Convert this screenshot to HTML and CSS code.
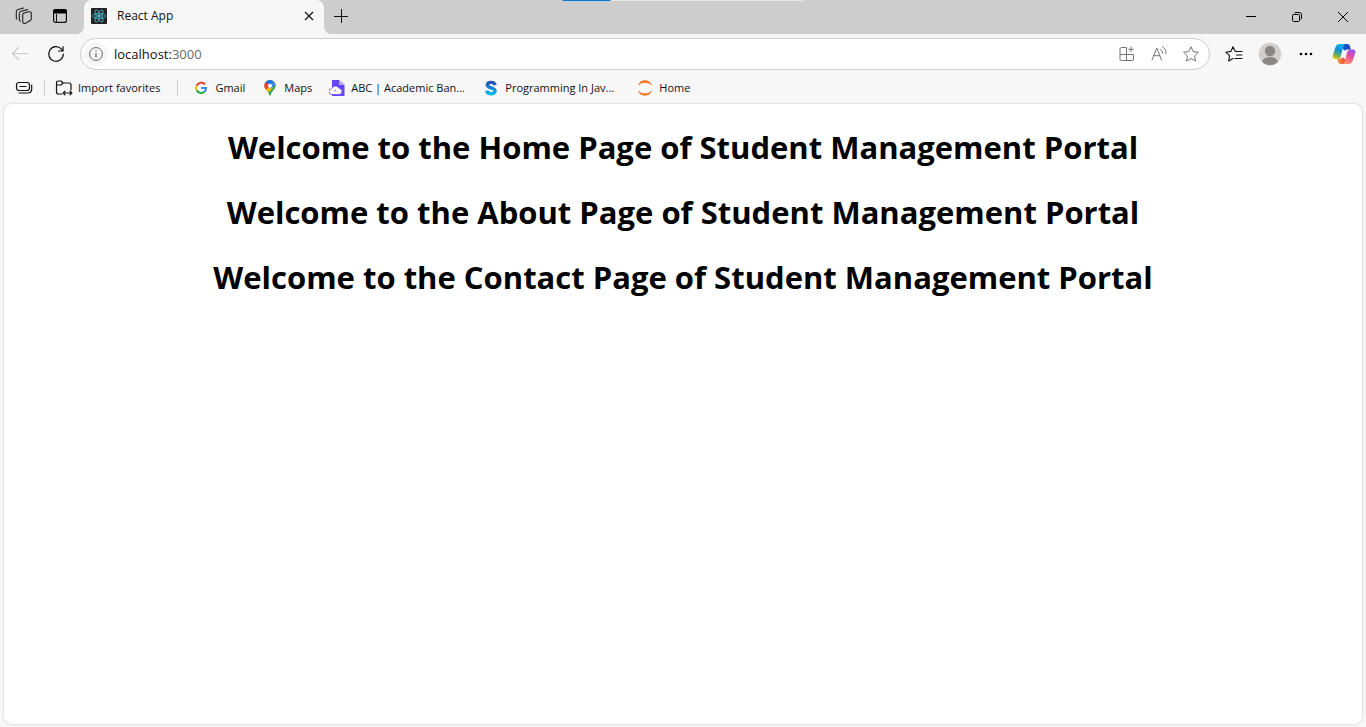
FILE: index.html
```html
<!DOCTYPE html>
<html lang="en">
<head>
<meta charset="utf-8">
<title>React App</title>
<link rel="stylesheet" href="styles.css">
</head>
<body>
<div class="browser">
  <header class="tabstrip">
    <div class="share-bar"><span class="share-handle"></span></div>
    <div class="strip-left">
      <button class="icon-btn" aria-label="Workspaces">
        <svg width="18" height="18" viewBox="0 0 18 18" fill="none" stroke="#222" stroke-width="1.1" stroke-linejoin="round" stroke-linecap="round"><path d="M8.2 6.3 13.8 4.8Q16.2 4.3 16.3 6.8V11.7Q16.3 13 15.2 13.5L11 16Q8 17.500 7.700 14.500V7.500Q7.700 6.500 8.900 6.200Z"/><path d="M5.200 14.200Q4.300 13.500 4.400 12V6.500Q4.400 4.800 6 4.300L12.500 2.600"/><path d="M1.900 12Q1.200 11.500 1.300 10V4.700Q1.300 3 3 2.500L8.700 1"/></svg>
      </button>
      <button class="icon-btn" aria-label="Tab actions menu">
        <svg width="16" height="16" viewBox="0 0 16 16" fill="none"><rect x="1.600" y="1.600" width="12.800" height="12.800" rx="2" stroke="#111" stroke-width="1.200"/><path d="M1 5.500V3.500Q1 1 3.500 1h9Q15 1 15 3.500v2Z" fill="#000"/><path d="M4.500 6v8.400" stroke="#111" stroke-width="1"/></svg>
      </button>
    </div>
    <div class="tab">
      <svg width="16" height="16" viewBox="0 0 16 16"><rect width="16" height="16" rx="1" fill="#222"/><g fill="none" stroke="#53b9d1" stroke-width=".8"><ellipse cx="8" cy="8" rx="6.800" ry="2.600"/><ellipse cx="8" cy="8" rx="6.800" ry="2.600" transform="rotate(60 8 8)"/><ellipse cx="8" cy="8" rx="6.800" ry="2.600" transform="rotate(120 8 8)"/></g><circle cx="8" cy="8" r="1.400" fill="#61dafb"/></svg>
      <span class="tab-title">React App</span>
      <button class="tab-close" aria-label="Close tab"><svg width="10" height="10" viewBox="0 0 10 10" stroke="#111" stroke-width="1.200"><path d="m1 1 8 8M9 1 1 9"/></svg></button>
    </div>
    <button class="new-tab" aria-label="New tab"><svg width="14" height="14" viewBox="0 0 14 14" stroke="#111" stroke-width="1"><path d="M7.500 0v14M0 7.500h14"/></svg></button>
    <div class="window-controls">
      <button class="win-btn" aria-label="Minimize"><svg width="10" height="10" viewBox="0 0 10 10" stroke="#000"><path d="M0 4.500h10"/></svg></button>
      <button class="win-btn" aria-label="Restore"><svg width="10" height="10" viewBox="0 0 10 10" fill="none" stroke="#000"><rect x=".5" y="2.500" width="7" height="7" rx="1.200"/><path d="M2.500 1Q3 .5 4 .5h3.200Q9.500 .5 9.500 2.800V6q0 1-.7 1.500"/></svg></button>
      <button class="win-btn" aria-label="Close"><svg width="10" height="10" viewBox="0 0 10 10" stroke="#000"><path d="m0 0 10 10M10 0 0 10"/></svg></button>
    </div>
  </header>

  <nav class="toolbar" aria-label="Navigation">
    <button class="icon-btn" aria-label="Back"><svg width="18" height="16" viewBox="0 0 18 16" fill="none" stroke="#c9c9c9" stroke-width="1.100"><path d="M17 7.500H1.500M8 1 1.500 7.500 8 14"/></svg></button>
    <button class="icon-btn" aria-label="Refresh"><svg width="18" height="18" viewBox="0 0 18 18" fill="none" stroke="#111" stroke-width="1.200" stroke-linecap="round"><path d="M16.300 9A7.300 7.300 0 1 1 14.500 4.200L16 6M16 1.500V6h-4.500"/></svg></button>
    <div class="address">
      <button class="site-info" aria-label="View site information"><svg width="14" height="14" viewBox="0 0 14 14" fill="none" stroke="#666"><circle cx="7" cy="7" r="6.400"/><path d="M7 6v4.500M7 3.500v1.200" stroke-width="1.200"/></svg></button>
      <label class="url"><span class="url-port" aria-hidden="true"><span class="url-host">localhost:</span>3000</span><input class="url-input" type="text" aria-label="Address bar" value="localhost:3000"></label>
      <button class="addr-btn" aria-label="App available"><svg width="16" height="16" viewBox="0 0 16 16" fill="none" stroke="#767676"><path d="M7.500 1.500h-5q-1.500 0-1.500 1.500v10q0 1.500 1.500 1.500h10.500q1.500 0 1.500-1.500V8.500H1M7.500 1.500v13M12 .5v5.500M9.300 3.300h5.500"/></svg></button>
      <button class="addr-btn" aria-label="Read aloud"><svg width="16" height="16" viewBox="0 0 16 16" fill="none" stroke="#767676" stroke-linecap="round"><path d="M1 14 5.800 2l4.700 12M2.800 9.700h6M9.500 3.200q2.200 1.300 2.200 3.800M11.500 .8q3.800 2.200 3.600 6.700"/></svg></button>
      <button class="addr-btn" aria-label="Add to favorites"><svg width="16" height="16" viewBox="0 0 16 16" fill="none" stroke="#767676" stroke-linejoin="round"><path d="m8 .8 2.200 4.700 5.200.7-3.800 3.600.9 5.200L8 12.500 3.500 15l.9-5.200L.6 6.200l5.200-.7Z"/></svg></button>
    </div>
    <div class="tools">
      <button class="icon-btn" aria-label="Favorites"><svg width="18" height="16" viewBox="0 0 18 16" fill="none" stroke="#111" stroke-width="1.100" stroke-linecap="round" stroke-linejoin="round"><path d="M12 5.500 10 5 8 .8 5.900 5.400.8 6.200l3.800 3.500-.9 5.200L8 12.600M10.500 5.500H17M11.500 9H17M9.800 12.500H17"/></svg></button>
      <button class="icon-btn" aria-label="Profile"><svg width="24" height="24" viewBox="0 0 24 24"><circle cx="12" cy="12" r="11.300" fill="#d2d0ce"/><circle cx="12" cy="9" r="5.200" fill="#8a8886"/><path d="M4.200 19.500Q5.500 15 12 15t7.800 4.500Q17 23.300 12 23.300T4.200 19.500Z" fill="#8a8886"/></svg></button>
      <button class="icon-btn" aria-label="Settings and more"><svg width="14" height="4" viewBox="0 0 14 4"><circle cx="2" cy="2" r="1.300"/><circle cx="7" cy="2" r="1.300"/><circle cx="12" cy="2" r="1.300"/></svg></button>
      <button class="icon-btn copilot" aria-label="Copilot"><svg width="24" height="22" viewBox="0 0 24 22"><defs><linearGradient id="ca" x1=".6" y1="0" x2=".25" y2="1"><stop stop-color="#19b5f1"/><stop offset=".4" stop-color="#128fd8"/><stop offset=".7" stop-color="#55ae6c"/><stop offset="1" stop-color="#f2c600"/></linearGradient><linearGradient id="cb" x1=".7" y1="0" x2=".2" y2="1"><stop stop-color="#9b51f2"/><stop offset=".45" stop-color="#e8529c"/><stop offset="1" stop-color="#ff9c5c"/></linearGradient><linearGradient id="cc"><stop stop-color="#0a5fd0"/><stop offset="1" stop-color="#2443b4"/></linearGradient><linearGradient id="cd"><stop stop-color="#f0a23a"/><stop offset="1" stop-color="#ed4e45"/></linearGradient></defs><path d="M11 1h4.500q1.800 0 2.300 2l1.200 3.500h-3.500q-1.600 0-2.500 1.200L11 6Z" fill="url(#cc)"/><path d="M13 21H8.500q-1.800 0-2.300-2L5 15.500h3.500q1.600 0 2.500-1.200L13 16Z" fill="url(#cd)"/><path d="M7.500 1h6q-1.500 0-2 2L8.800 13q-.7 3-3 3H3.200Q0 16 .7 12.500L3.500 4Q4.600 1 7.500 1Z" fill="url(#ca)"/><path d="M16.500 21h-6q1.500 0 2-2l2.700-10q.7-2.500 3-2.500h2.600Q24 6.500 23.300 10l-2.800 8q-1.100 3-4 3Z" fill="url(#cb)"/></svg></button>
    </div>
  </nav>

  <nav class="favorites" aria-label="Favorites bar">
    <button class="icon-btn fav-menu" aria-label="Favorites bar menu"><svg width="18" height="14" viewBox="0 0 18 14" fill="none" stroke="#111" stroke-width="1.200" stroke-linecap="round"><rect x="1.500" y="1.500" width="13" height="8" rx="2.500"/><path d="M5 5.500h6M4 12h8.500Q16.700 12 16.700 8V4" /></svg></button>
    <span class="divider"></span>
    <button class="fav fav-import"><svg width="18" height="18" viewBox="0 0 18 18" fill="none" stroke="#111" stroke-width="1.200" stroke-linejoin="round" stroke-linecap="round"><path d="M7 15H3.500Q1.500 15 1.500 13V4q0-2 2-2H6l2 2h6q2 0 2 2v5M1.500 6H6l2-2M8.500 14h8M10 12.200 8.200 14l1.800 1.800M15 12.200l1.800 1.800-1.800 1.800"/></svg>Import favorites</button>
    <span class="divider divider-wide"></span>
    <a class="fav" href="#gmail"><svg width="16" height="16" viewBox="0 0 16 16" fill="none" stroke-width="2.200"><circle cx="8" cy="8" r="8" fill="#fff"/><path d="M12 4.500A5 5 0 0 0 3.600 5.700" stroke="#ea4335"/><path d="M3.600 5.700a5 5 0 0 0 0 4.600" stroke="#fbbc05"/><path d="M3.600 10.300a5 5 0 0 0 7.700 1.500" stroke="#34a853"/><path d="M11.300 11.800A5 5 0 0 0 13 8H8" stroke="#4285f4"/></svg>Gmail</a>
    <a class="fav" href="#maps"><svg width="16" height="16" viewBox="0 0 16 16"><defs><clipPath id="pin"><path d="M8 0a5.700 5.700 0 0 1 5.700 5.700C13.700 9.500 9.500 10.500 8.800 15q-.8 1.500-1.600 0C6.500 10.500 2.300 9.500 2.300 5.700A5.700 5.700 0 0 1 8 0Z"/></clipPath></defs><g clip-path="url(#pin)"><path fill="#34a853" d="M0 0h16v16H0Z"/><path fill="#fbbc04" d="M1 8.500 7 2l4 6-6 6H1Z"/><path fill="#ea4335" d="M1 1h4l4 4-5.500 5L0 7Z"/><path fill="#1a73e8" d="m3.500 1.500 4 4L13 0H4Z"/><path fill="#4285f4" d="m7 6 6-5 1 3-5 5Z"/></g><circle cx="8" cy="5.700" r="2" fill="#fff"/></svg>Maps</a>
    <a class="fav fav-long" href="#abc"><svg width="16" height="16" viewBox="0 0 16 16"><path d="M3 0h7l5.500 5v11H3Z" fill="#6544f5"/><path d="M10 0v5h5.500Z" fill="#b8a8ff"/><path d="M3 14.500a3 3 0 0 1-.3-6 4 4 0 0 1 7.300-.3 3.200 3.200 0 0 1 .7 6.300Z" fill="#fff" stroke="#6544f5" stroke-width=".8"/><path d="M6 9.500v2" stroke="#6544f5"/></svg><span class="fav-text">ABC | Academic Ban...</span></a>
    <a class="fav fav-long" href="#java"><svg width="16" height="16" viewBox="0 0 16 16" fill="none"><defs><linearGradient id="sg" x2="0" y2="1"><stop stop-color="#2451ae"/><stop offset="1" stop-color="#00b8f5"/></linearGradient></defs><path d="M12 5.200C11.500 1.500 4.300 1.500 4.300 5s7.800 2.300 7.800 6-8 3.800-8.300-.3" stroke="url(#sg)" stroke-width="3.400"/></svg><span class="fav-text">Programming In Jav...</span></a>
    <a class="fav" href="#home"><svg width="16" height="16" viewBox="0 0 16 16" fill="#f37726"><path d="M.8 5.500Q3 .3 8 .3t7.200 5.200Q12.500 2.800 8 2.800T.8 5.500ZM.8 10.500Q3 15.700 8 15.700t7.200-5.200Q12.500 13.200 8 13.200T.8 10.500Z"/></svg>Home</a>
  </nav>

  <main class="page">
    <h1 class="heading">Welcome to the Home Page of Student Management Portal</h1>
    <h1 class="heading">Welcome to the About Page of Student Management Portal</h1>
    <h1 class="heading">Welcome to the Contact Page of Student Management Portal</h1>
  </main>
</div>
</body>
</html>
```
FILE: styles.css
```css
* { box-sizing: border-box; }

body {
  margin: 0;
  font: 12px/16px "Segoe UI", "Open Sans", "Noto Sans", sans-serif;
  color: #111;
}

button {
  margin: 0;
  padding: 0;
  border: 0;
  background: none;
  color: inherit;
  font: inherit;
}

svg { display: block; flex: none; }

.browser {
  display: flex;
  flex-direction: column;
  min-height: 100vh;
  background: #f7f7f7;
}

.tabstrip {
  position: relative;
  display: flex;
  height: 34px;
  background: #cdcdcd;
}

.share-bar {
  position: absolute;
  top: 0;
  left: 50%;
  width: 241px;
  height: 1px;
  background: #e6e6e6;
  transform: translateX(-50%);
}

.share-handle {
  display: block;
  width: 20%;
  height: 1px;
  background: #0078d7;
}

.icon-btn {
  display: flex;
  flex: none;
  align-items: center;
  justify-content: center;
  width: 36px;
  height: 32px;
}

.strip-left {
  display: flex;
  width: 84px;
  padding-left: 6px;
}

.tab {
  position: relative;
  display: flex;
  align-items: center;
  gap: 10px;
  width: 240px;
  padding: 0 10px 2px 7px;
  border-radius: 8px 8px 0 0;
  background: #f7f7f7;
}

.tab::before,
.tab::after {
  content: "";
  position: absolute;
  bottom: 0;
  width: 8px;
  height: 8px;
}

.tab::before {
  right: 100%;
  background: radial-gradient(circle at 0 0, #cdcdcd 8px, #f7f7f7 8px);
}

.tab::after {
  left: 100%;
  background: radial-gradient(circle at 100% 0, #cdcdcd 8px, #f7f7f7 8px);
}

.tab-title { flex: 1; }

.new-tab {
  display: flex;
  align-items: center;
  justify-content: center;
  width: 34px;
  height: 32px;
}

.window-controls { display: flex; margin-left: auto; }

.win-btn {
  display: flex;
  align-items: center;
  justify-content: center;
  width: 46px;
  height: 34px;
}

.toolbar {
  display: flex;
  align-items: center;
  height: 40px;
  padding: 0 2px;
}

.address {
  display: flex;
  flex: 1;
  align-items: center;
  height: 32px;
  margin-left: 6px;
  padding: 0 2px 0 3px;
  border: 1px solid #cecece;
  border-radius: 16px;
  background: #fff;
}

.site-info {
  display: flex;
  align-items: center;
  justify-content: center;
  width: 24px;
  height: 24px;
  border-radius: 12px;
  background: #f7f7f7;
}

.url {
  position: relative;
  flex: 1;
  margin-left: 6px;
  font-size: 13px;
}

.url-host { color: #111; }

.url-port { color: #6b6b6b; }

.url-input {
  position: absolute;
  inset: 0;
  width: 100%;
  padding: 0;
  border: 0;
  outline: 0;
  background: none;
  color: transparent;
  font: inherit;
}

.addr-btn {
  display: flex;
  align-items: center;
  justify-content: center;
  width: 32px;
  height: 28px;
}

.tools { display: flex; padding-left: 6px; }

.copilot { width: 40px; }

.favorites {
  display: flex;
  align-items: center;
  height: 28px;
  padding-left: 6px;
  font-size: 11px;
}

.divider {
  width: 1px;
  height: 16px;
  margin: 0 10px 0 2px;
  background: #cfcfcf;
}

.divider-wide { margin: 0 15px 0 0; }

.fav {
  display: flex;
  align-items: center;
  gap: 6px;
  margin-right: 17px;
  color: inherit;
  text-decoration: none;
  white-space: nowrap;
}

.fav-import { gap: 5px; }

.fav-long { width: 137px; }

.page {
  flex: 1;
  margin: 2px 4px 3px;
  border-radius: 8px;
  background: #fff;
  box-shadow: 0 0 3px rgba(0, 0, 0, 0.2);
  text-align: center;
}

.heading {
  margin: 22px 0;
  font-size: 31px;
  font-weight: 700;
  line-height: 43px;
  color: #000;
}
```
